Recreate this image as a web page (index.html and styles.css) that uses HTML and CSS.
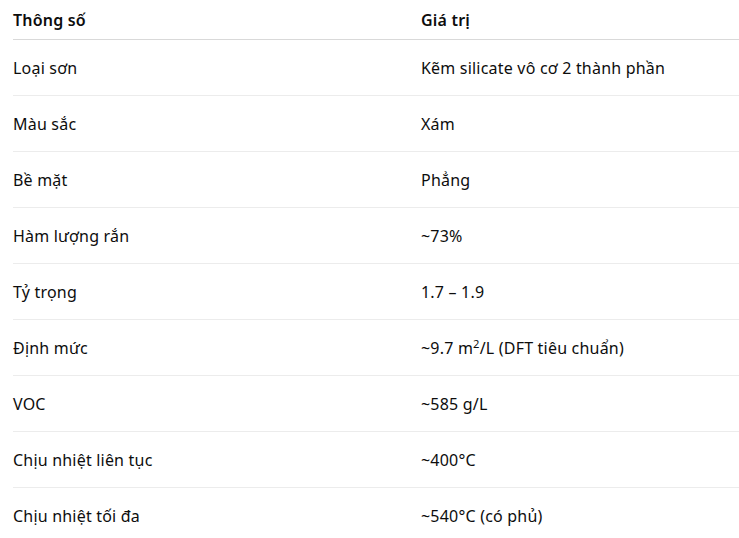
FILE: index.html
```html
<!DOCTYPE html>
<html lang="vi">
<head>
<meta charset="utf-8">
<link rel="stylesheet" href="styles.css">
</head>
<body>
<div class="wrap">
<table class="spec">
<thead>
<tr><th class="c1">Thông số</th><th class="c2">Giá trị</th></tr>
</thead>
<tbody>
<tr><td>Loại sơn</td><td>Kẽm silicate vô cơ 2 thành phần</td></tr>
<tr><td>Màu sắc</td><td>Xám</td></tr>
<tr><td>Bề mặt</td><td>Phẳng</td></tr>
<tr><td>Hàm lượng rắn</td><td>~73%</td></tr>
<tr><td>Tỷ trọng</td><td>1.7 – 1.9</td></tr>
<tr><td>Định mức</td><td>~9.7 m<sup>2</sup>/L (DFT tiêu chuẩn)</td></tr>
<tr><td>VOC</td><td>~585 g/L</td></tr>
<tr><td>Chịu nhiệt liên tục</td><td>~400°C</td></tr>
<tr><td>Chịu nhiệt tối đa</td><td>~540°C (có phủ)</td></tr>
</tbody>
</table>
</div>
</body>
</html>
```
FILE: styles.css
```css
html, body { margin: 0; padding: 0; background: #fff; }
body { font-family: "Noto Sans", "Open Sans", sans-serif; color: #0d0d0d; font-size: 16px; letter-spacing: 0.2px; overflow: hidden; }
.wrap { padding-left: 13px; }
.spec { border-collapse: collapse; width: 726px; table-layout: fixed; }
.spec th { text-align: left; font-weight: 600; height: 38px; padding: 1px 0 0; border-bottom: 1px solid #d9d9d9; vertical-align: middle; }
.spec th.c1 { width: 408px; }
.spec td { height: 54px; padding: 1px 0 0; border-bottom: 1px solid #ececec; vertical-align: middle; }
.spec sup { font-size: 0.7em; line-height: 0; vertical-align: 0.55em; }
```
